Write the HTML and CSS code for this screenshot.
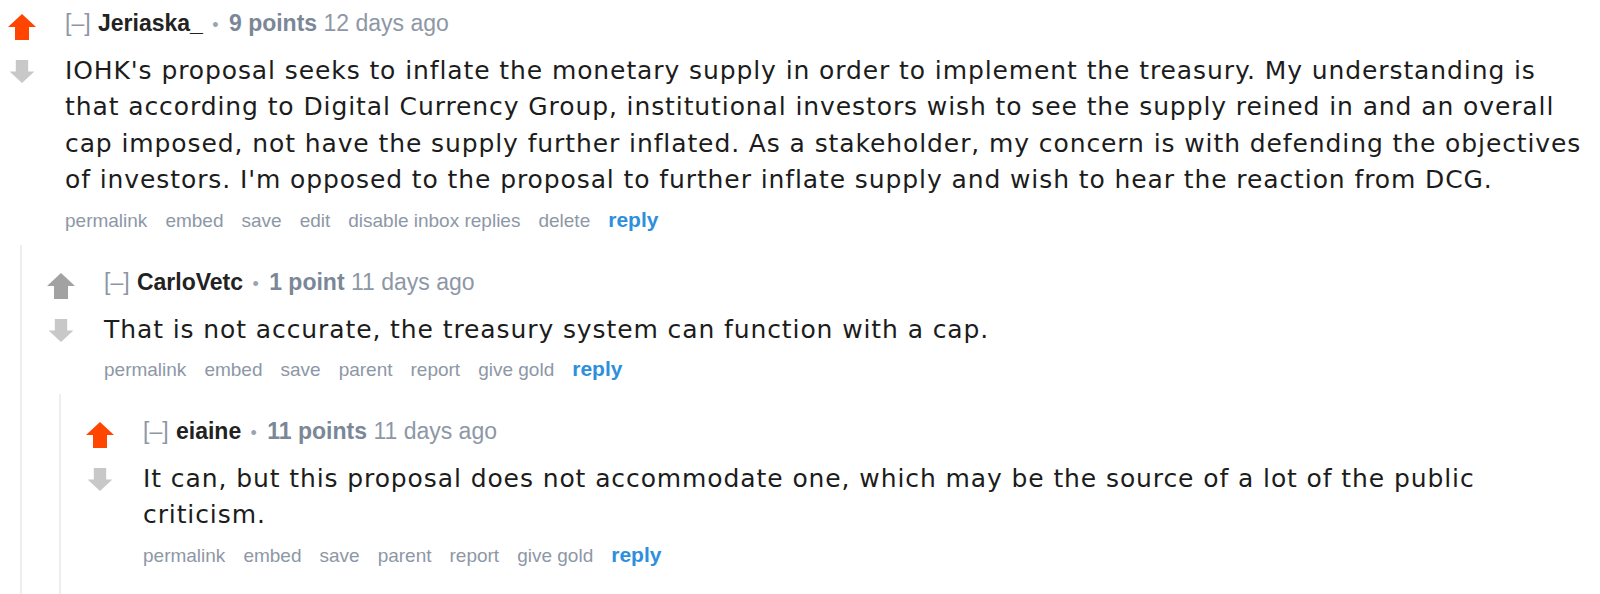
FILE: index.html
```html
<!DOCTYPE html>
<html lang="en">
<head>
    <meta charset="UTF-8">
    <title>comments</title>
    <link rel="stylesheet" href="styles.css">
</head>
<body>

<div class="commentarea">

<div class="comment">
    <div class="row">
        <div class="votes">
            <svg class="arrow up upmod" viewBox="0 0 28 26"><path d="M14 0 L28 13 L21 13 L21 26 L7 26 L7 13 L0 13 Z"/></svg>
            <svg class="arrow down" viewBox="0 0 28 26"><path d="M14 26 L28 13 L21 13 L21 0 L7 0 L7 13 L0 13 Z"/></svg>
        </div>
        <div class="entry">
            <p class="tagline">
                <a class="expand">[–]</a>
                <a class="author">Jeriaska_</a>
                <span class="dot">•</span>
                <span class="score">9 points</span>
                <span class="time">12 days ago</span>
            </p>
            <div class="md">
                <p>IOHK's proposal seeks to inflate the monetary supply in order to implement the treasury. My understanding is that according to Digital Currency Group, institutional investors wish to see the supply reined in and an overall cap imposed, not have the supply further inflated. As a stakeholder, my concern is with defending the objectives of investors. I'm opposed to the proposal to further inflate supply and wish to hear the reaction from DCG.</p>
            </div>
            <ul class="buttons">
                <li><a>permalink</a></li>
                <li><a>embed</a></li>
                <li><a>save</a></li>
                <li><a>edit</a></li>
                <li><a>disable inbox replies</a></li>
                <li><a>delete</a></li>
                <li><a class="reply">reply</a></li>
            </ul>
        </div>
    </div>

    <div class="child">
        <div class="comment">
            <div class="row">
                <div class="votes">
                    <svg class="arrow up" viewBox="0 0 28 26"><path d="M14 0 L28 13 L21 13 L21 26 L7 26 L7 13 L0 13 Z"/></svg>
                    <svg class="arrow down" viewBox="0 0 28 26"><path d="M14 26 L28 13 L21 13 L21 0 L7 0 L7 13 L0 13 Z"/></svg>
                </div>
                <div class="entry">
                    <p class="tagline">
                        <a class="expand">[–]</a>
                        <a class="author">CarloVetc</a>
                        <span class="dot">•</span>
                        <span class="score">1 point</span>
                        <span class="time">11 days ago</span>
                    </p>
                    <div class="md">
                        <p>That is not accurate, the treasury system can function with a cap.</p>
                    </div>
                    <ul class="buttons">
                        <li><a>permalink</a></li>
                        <li><a>embed</a></li>
                        <li><a>save</a></li>
                        <li><a>parent</a></li>
                        <li><a>report</a></li>
                        <li><a>give gold</a></li>
                        <li><a class="reply">reply</a></li>
                    </ul>
                </div>
            </div>

            <div class="child">
                <div class="comment">
                    <div class="row">
                        <div class="votes">
                            <svg class="arrow up upmod" viewBox="0 0 28 26"><path d="M14 0 L28 13 L21 13 L21 26 L7 26 L7 13 L0 13 Z"/></svg>
                            <svg class="arrow down" viewBox="0 0 28 26"><path d="M14 26 L28 13 L21 13 L21 0 L7 0 L7 13 L0 13 Z"/></svg>
                        </div>
                        <div class="entry">
                            <p class="tagline">
                                <a class="expand">[–]</a>
                                <a class="author">eiaine</a>
                                <span class="dot">•</span>
                                <span class="score">11 points</span>
                                <span class="time">11 days ago</span>
                            </p>
                            <div class="md">
                                <p>It can, but this proposal does not accommodate one, which may be the source of a lot of the public criticism.</p>
                            </div>
                            <ul class="buttons">
                                <li><a>permalink</a></li>
                                <li><a>embed</a></li>
                                <li><a>save</a></li>
                                <li><a>parent</a></li>
                                <li><a>report</a></li>
                                <li><a>give gold</a></li>
                                <li><a class="reply">reply</a></li>
                            </ul>
                        </div>
                    </div>
                </div>

                <!-- next reply, mostly below the fold -->
                <div class="comment">
                    <div class="row">
                        <div class="votes">
                            <svg class="arrow up" viewBox="0 0 28 26"><path d="M14 0 L28 13 L21 13 L21 26 L7 26 L7 13 L0 13 Z"/></svg>
                        </div>
                    </div>
                </div>
            </div>
        </div>
    </div>
</div>

</div>

</body>
</html>
```

FILE: styles.css
```css
body {
    margin: 0;
    background-color: white;
    overflow: hidden;
}

.commentarea {
    padding: 11px 0 0 8px;
}

.child .comment {
    padding-top: 25px;
}

.row {
    display: flex;
    flex-direction: row;
}

/* vote arrows */
.votes {
    flex: 0 0 28px;
    display: flex;
    flex-direction: column;
    padding-top: 3px;
    margin-right: 29px;
}

.arrow {
    width: 28px;
    height: 26px;
    fill: #c8c8c8;
}

.arrow.up {
    fill: #a2a2a2;
}

.arrow.upmod {
    fill: #ff4500;
}

.arrow.down {
    margin-top: 20px;
    height: 23px;
}

.entry {
    flex: 1;
    padding-right: 14px;
}

.tagline {
    margin: 0;
    font-family: "Liberation Sans", Arial, sans-serif;
    font-size: 23px;
    line-height: 25px;
    color: #8d97a6;
}

.tagline .author {
    color: #222;
    font-weight: bold;
    margin-left: 1px;
}

.tagline .dot {
    font-size: 18px;
    color: #9aa3b0;
    margin: 0 3px;
}

.tagline .score {
    font-weight: bold;
    color: #7b8797;
    margin-left: 1px;
}

.md {
    margin-top: 15px;
    font-family: "DejaVu Sans", Verdana, sans-serif;
    font-size: 25px;
    letter-spacing: 0.9px;
    line-height: 36.4px;
    color: #1c1c1c;
}

.md p {
    margin: 0;
}

.buttons {
    list-style: none;
    margin: 9px 0 0 0;
    padding: 0;
    display: flex;
    flex-direction: row;
    align-items: baseline;
    gap: 18px;
    font-family: "Liberation Sans", Arial, sans-serif;
    font-size: 19px;
    line-height: 24px;
    color: #8d97a6;
}

.buttons .reply {
    color: #2e8fdc;
    font-weight: bold;
    font-size: 21px;
}

/* nested replies */
.child {
    margin-left: 12px;
    margin-top: 12px;
    padding-left: 25px;
    border-left: 2px solid #eeeeee;
}
```
